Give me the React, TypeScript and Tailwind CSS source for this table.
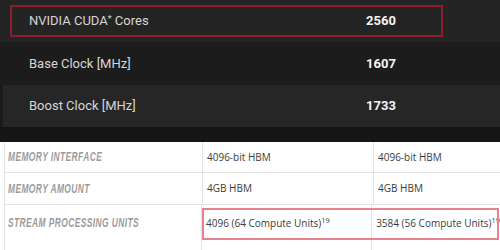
import React from "react";

const labelCls =
  "inline-block origin-left scale-x-[0.7] whitespace-nowrap text-[12px] font-bold italic uppercase tracking-[0.6px] text-[#9b9b9b] [font-family:'Liberation_Sans',sans-serif]";
const valCls =
  "whitespace-nowrap text-[10px] text-[#3c3c3c] [font-family:'Open_Sans',sans-serif]";

function Sup({ children }: { children: React.ReactNode }) {
  return <sup className="text-[7.5px] relative -top-[4px] align-baseline">{children}</sup>;
}

export default function App() {
  return (
    <div className="w-[500px] h-[250px] overflow-hidden bg-white flex flex-col [font-family:Roboto,sans-serif]">
      {/* NVIDIA section */}
      <div className="bg-[#1b1b1b]">
        <div className="h-[42px] bg-[#242424] pt-[5px] pl-[10px]">
          <div className="w-[433px] h-[32px] border-2 border-[#8c1e2e] flex items-center pl-[17px]">
            <span className="w-[337px] text-[13px] text-[#d6d6d6]">
              NVIDIA CUDA<span className="text-[9px] relative -top-[3px]">*</span> Cores
            </span>
            <span className="text-[13px] font-bold text-[#f4f4f4]">2560</span>
          </div>
        </div>
        <div className="h-[43px] bg-[#1c1c1c] flex items-center pl-[29px]">
          <span className="w-[337px] text-[13px] text-[#d6d6d6]">Base Clock [MHz]</span>
          <span className="text-[13px] font-bold text-[#f4f4f4]">1607</span>
        </div>
        <div className="h-[42px] bg-[#262626] ml-[3px] flex items-center pl-[26px]">
          <span className="w-[337px] text-[13px] text-[#d6d6d6]">Boost Clock [MHz]</span>
          <span className="text-[13px] font-bold text-[#f4f4f4]">1733</span>
        </div>
      </div>
      <div className="h-[15px] bg-[#151515]" />

      {/* AMD table */}
      <div className="flex-1 ml-[4px] border-l border-[#e2e2e2] flex flex-col">
        <div className="h-[30px] flex items-center">
          <div className="w-[197px] pl-[3px] flex items-center">
            <span className={labelCls}>Memory Interface</span>
          </div>
          <div className="w-[171px] h-full border-l border-[#e2e2e2] pl-[4px] flex items-center">
            <span className={valCls}>4096-bit HBM</span>
          </div>
          <div className="flex-1 h-full border-l border-[#e2e2e2] pl-[4px] flex items-center">
            <span className={valCls}>4096-bit HBM</span>
          </div>
        </div>
        <div className="h-[32px] border-t border-[#e2e2e2] flex items-center">
          <div className="w-[197px] pl-[3px] flex items-center">
            <span className={labelCls}>Memory Amount</span>
          </div>
          <div className="w-[171px] h-full border-l border-[#e2e2e2] pl-[4px] flex items-center">
            <span className={valCls}>4GB HBM</span>
          </div>
          <div className="flex-1 h-full border-l border-[#e2e2e2] pl-[4px] flex items-center">
            <span className={valCls}>4GB HBM</span>
          </div>
        </div>
        <div className="flex-1 border-t border-[#e2e2e2] flex relative">
          <div className="w-[197px] pl-[3px] h-[36px] flex items-center">
            <span className={labelCls}>Stream Processing Units</span>
          </div>
          <div className="w-[171px] border-l border-[#e2e2e2] pl-[4px] h-full">
            <div className="h-[36px] flex items-center">
              <span className={valCls}>
                4096 (64 Compute Units)<Sup>19</Sup>
              </span>
            </div>
          </div>
          <div className="flex-1 border-l border-[#e2e2e2] pl-[4px] h-full">
            <div className="h-[36px] flex items-center">
              <span className={valCls}>
                3584 (56 Compute Units)<Sup>19</Sup>
              </span>
            </div>
          </div>
          <div className="absolute left-[197px] top-[3px] w-[297px] h-[32px] border-2 border-[#e7838d] pointer-events-none" />
        </div>
      </div>
    </div>
  );
}
